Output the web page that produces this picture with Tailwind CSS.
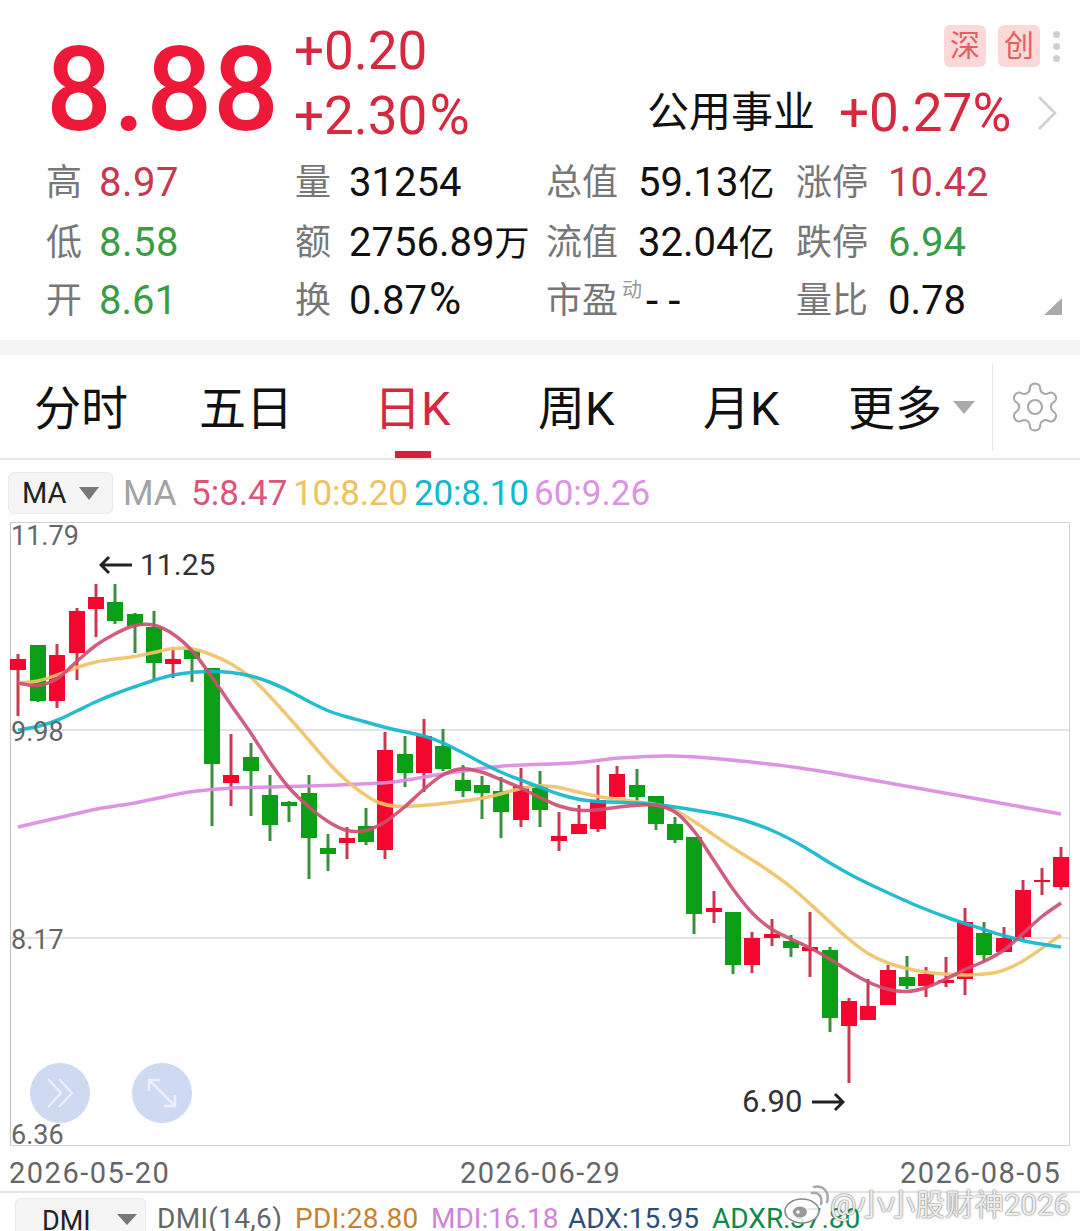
<!DOCTYPE html>
<html lang="en">
<head>
    <meta charset="UTF-8">
    <meta name="viewport" content="width=device-width, initial-scale=1.0">
    <script src="https://cdn.jsdelivr.net/npm/@tailwindcss/browser@4"></script>
    <title>K-line</title>
</head>
<body class="bg-white overflow-hidden font-['Roboto','Noto_Sans_CJK_SC',sans-serif]">
<div class="w-[1080px] h-[1231px] overflow-hidden relative">

    <!-- Quote header -->
    <section class="h-[340px]">
        <div class="flex h-[153px]">
            <div class="w-[295px] shrink-0 pl-[46px] pt-[32px] text-[116px] leading-[116px] tracking-[1px] font-medium text-[#ee1838]">8.88</div>
            <div class="w-[353px] shrink-0 pt-[19px] -ml-[1px] text-[53px] leading-[65px] text-[#d6283f]">
                <div>+0.20</div>
                <div>+2.30<span class="ml-[2px] text-[55px] leading-none">%</span></div>
            </div>
            <div class="flex-1 ml-[1px]">
                <div class="flex justify-end items-center gap-3 pt-[25px] pr-[20px]">
                    <span class="w-[42px] h-[42px] rounded-md bg-[#fcd9d9] text-[#e4605f] text-[30px] leading-[42px] text-center">深</span>
                    <span class="w-[42px] h-[42px] rounded-md bg-[#fcd9d9] text-[#e4605f] text-[30px] leading-[42px] text-center">创</span>
                    <div class="flex flex-col gap-[5px] ml-[1px]">
                        <i class="block w-[7px] h-[7px] rounded-full bg-[#cfcfcf]"></i>
                        <i class="block w-[7px] h-[7px] rounded-full bg-[#cfcfcf]"></i>
                        <i class="block w-[7px] h-[7px] rounded-full bg-[#cfcfcf]"></i>
                    </div>
                </div>
                <div class="flex items-center mt-[22px] h-[48px]">
                    <span class="w-[192px] -ml-[1px] text-[42px] leading-[48px] text-[#111]">公用事业</span>
                    <span class="w-[198px] text-[53px] leading-[48px] text-[#d6283f]">+0.27%</span>
                    <svg width="20" height="36" viewBox="0 0 20 36" fill="none" stroke="#cfcfcf" stroke-width="2.5"><path d="M2 2l16 16L2 34"/></svg>
                </div>
            </div>
        </div>
        <div class="relative grid grid-cols-[249px_251px_250px_1fr] grid-rows-[60px_60px_55px] pl-[46px] text-[40px] leading-[48px] text-[#111]">
            <div class="flex items-center"><span class="w-[53px] text-[36px] text-[#777]">高</span><span class="text-[#c9384f] tracking-[0.5px]">8.97</span></div>
            <div class="flex items-center"><span class="w-[54px] text-[36px] text-[#777]">量</span><span>31254</span></div>
            <div class="flex items-center"><span class="w-[92px] text-[36px] text-[#777]">总值</span><span>59.13<span class="text-[36px] leading-none">亿</span></span></div>
            <div class="flex items-center"><span class="w-[92px] text-[36px] text-[#777]">涨停</span><span class="text-[#c9384f]">10.42</span></div>

            <div class="flex items-center"><span class="w-[53px] text-[36px] text-[#777]">低</span><span class="text-[#3a9c45] tracking-[0.5px]">8.58</span></div>
            <div class="flex items-center"><span class="w-[54px] text-[36px] text-[#777]">额</span><span class="whitespace-nowrap">2756.89<span class="text-[35px] leading-none">万</span></span></div>
            <div class="flex items-center"><span class="w-[92px] text-[36px] text-[#777]">流值</span><span class="whitespace-nowrap">32.04<span class="text-[36px] leading-none">亿</span></span></div>
            <div class="flex items-center"><span class="w-[92px] text-[36px] text-[#777]">跌停</span><span class="text-[#3a9c45]">6.94</span></div>

            <div class="flex items-center"><span class="w-[53px] text-[36px] text-[#777]">开</span><span class="text-[#3a9c45]">8.61</span></div>
            <div class="flex items-center"><span class="w-[54px] text-[36px] text-[#777]">换</span><span>0.87<span class="ml-[2px] text-[44px] leading-none">%</span></span></div>
            <div class="flex items-center"><span class="text-[36px] text-[#777]">市盈</span><span class="text-[20px] text-[#999] ml-[4px] -translate-y-[11px] mr-[4px]">动</span><span class="tracking-[10px] text-[44px]">--</span></div>
            <div class="flex items-center"><span class="w-[92px] text-[36px] text-[#777]">量比</span><span>0.78</span></div>
            <svg class="absolute left-[1044px] top-[145px]" width="18" height="17" viewBox="0 0 18 17"><path d="M18 0v17H0z" fill="#ababab"/></svg>
        </div>
    </section>

    <div class="h-[15px] bg-[#f5f5f5]"></div>

    <!-- Period tabs -->
    <nav class="flex items-center h-[105px] pt-[5px] border-b-2 border-[#e6e6e6] relative text-[47px] leading-[60px] text-[#111]">
        <span class="ml-[34px] w-[165px]">分时</span>
        <span class="w-[175px]">五日</span>
        <span class="w-[164px] text-[#d6283f] relative">日K
            <i class="absolute left-[21px] top-[72px] w-[36px] h-[7px] bg-[#d6203c]"></i>
        </span>
        <span class="w-[165px]">周K</span>
        <span class="w-[145px]">月K</span>
        <span>更多</span>
        <svg class="ml-[11px] -mt-[4px]" width="22" height="13" viewBox="0 0 22 13"><path d="M0 0h22L11 13z" fill="#aaa"/></svg>
        <div class="w-px h-[88px] bg-[#e6e6e6] ml-[17px] -mt-[5px]"></div>
        <svg class="ml-[14px] -mt-[5px]" width="56" height="56" viewBox="0 0 24 24" fill="none" stroke="#a8a8a8" stroke-width="0.9"><path d="M12.22 2h-.44a2 2 0 0 0-2 2v.18a2 2 0 0 1-1 1.73l-.43.25a2 2 0 0 1-2 0l-.15-.08a2 2 0 0 0-2.73.73l-.22.38a2 2 0 0 0 .73 2.73l.15.1a2 2 0 0 1 1 1.72v.51a2 2 0 0 1-1 1.74l-.15.09a2 2 0 0 0-.73 2.73l.22.38a2 2 0 0 0 2.73.73l.15-.08a2 2 0 0 1 2 0l.43.25a2 2 0 0 1 1 1.73V20a2 2 0 0 0 2 2h.44a2 2 0 0 0 2-2v-.18a2 2 0 0 1 1-1.73l.43-.25a2 2 0 0 1 2 0l.15.08a2 2 0 0 0 2.73-.73l.22-.39a2 2 0 0 0-.73-2.73l-.15-.08a2 2 0 0 1-1-1.74v-.5a2 2 0 0 1 1-1.74l.15-.09a2 2 0 0 0 .73-2.73l-.22-.38a2 2 0 0 0-2.73-.73l-.15.08a2 2 0 0 1-2 0l-.43-.25a2 2 0 0 1-1-1.73V4a2 2 0 0 0-2-2z"/><circle cx="12" cy="12" r="3"/></svg>
    </nav>

    <!-- MA legend -->
    <div class="flex items-center h-[62px] pt-[4px] pl-[8px] text-[35px] leading-[40px]">
        <div class="flex items-center w-[105px] h-[42px] rounded-md bg-[#f5f5f5] border border-[#e9e9e9] pl-[13px] text-[29px] text-[#222]">
            MA
            <svg class="ml-[12px]" width="20" height="13" viewBox="0 0 20 13"><path d="M0 0h20L10 13z" fill="#777"/></svg>
        </div>
        <span class="ml-[10px] mt-[2px] w-[68px] text-[#a3a3a3]">MA</span>
        <span class="w-[102px] mt-[2px] text-[#d9567a]">5:8.47</span>
        <span class="w-[121px] mt-[2px] text-[#eec25e] tracking-[-0.2px]">10:8.20</span>
        <span class="w-[120px] mt-[2px] text-[#10b9cf] tracking-[-0.2px]">20:8.10</span>
        <span class="mt-[2px] text-[#dc93e2]">60:9.26</span>
    </div>

    <!-- Candle chart -->
    <div class="relative h-[624px] ml-[10px] w-[1060px] border border-[#d2d2d2] border-l-[#c4c4c4] text-[27px] leading-[30px] text-[#666]">
        <svg id="chart" class="absolute left-[-11px] top-[-523px]" width="1080" height="1231" viewBox="0 0 1080 1231" fill="none"></svg>
        <span class="absolute left-0 top-[-2px]">11.79</span>
        <span class="absolute left-0 top-[194px]">9.98</span>
        <span class="absolute left-0 top-[402px]">8.17</span>
        <span class="absolute left-0 top-[597px]">6.36</span>

        <div class="absolute left-[88px] top-[24px] flex items-center text-[30px] leading-[36px] text-[#333]">
            <svg width="34" height="20" viewBox="0 0 34 20" fill="none" stroke="#222" stroke-width="3"><path d="M33 10H2M10 2l-8 8 8 8"/></svg>
            <span class="ml-[7px]">11.25</span>
        </div>
        <div class="absolute left-[731px] top-[561px] flex items-center text-[31px] leading-[36px] text-[#333]">
            <span class="mr-[9px]">6.90</span>
            <svg width="34" height="20" viewBox="0 0 34 20" fill="none" stroke="#222" stroke-width="3"><path d="M1 10h31M24 2l8 8-8 8"/></svg>
        </div>

        <div class="absolute left-[19px] top-[540px] w-[60px] h-[60px] rounded-full bg-[#ced9f2] flex items-center justify-center">
            <svg width="36" height="36" viewBox="0 0 36 36" fill="none" stroke="#ecf0fa" stroke-width="2"><path d="M6 4l13 14L6 32M17 4l13 14-13 14"/></svg>
        </div>
        <div class="absolute left-[121px] top-[540px] w-[60px] h-[60px] rounded-full bg-[#ced9f2] flex items-center justify-center">
            <svg width="36" height="36" viewBox="0 0 36 36" fill="none" stroke="#ecf0fa" stroke-width="2.5"><path d="M5 5l26 26M5 16V5h11M31 20v11H20"/></svg>
        </div>
    </div>

    <!-- Date axis -->
    <div class="flex h-[47px] pl-[9px] border-b-2 border-[#e3e3e3] text-[29px] leading-[54px] tracking-[1.5px] text-[#666]">
        <span class="w-[451px]">2026-05-20</span>
        <span class="w-[440px]">2026-06-29</span>
        <span>2026-08-05</span>
    </div>

    <!-- DMI legend -->
    <div class="flex items-start pt-[5px] pl-[15px] text-[28px] leading-[34px]">
        <div class="flex items-center w-[131px] h-[45px] rounded-md bg-[#f5f5f5] border border-[#e9e9e9] pl-[26px] text-[27px] text-[#222]">
            DMI
            <svg class="ml-[26px] -mt-[3px]" width="20" height="11" viewBox="0 0 20 11"><path d="M0 0h20L10 11z" fill="#777"/></svg>
        </div>
        <span class="ml-[11px] mt-[4px] w-[138px] text-[#666] tracking-[0.3px]">DMI(14,6)</span>
        <span class="w-[136px] mt-[4px] text-[#c7812e] tracking-[0.3px]">PDI:28.80</span>
        <span class="w-[137px] mt-[4px] text-[#cf84d9]">MDI:16.18</span>
        <span class="w-[144px] mt-[4px] text-[#2c4f78]">ADX:15.95</span>
        <span class="mt-[4px] text-[#0f8a4a]">ADXR:37.80</span>
    </div>

    <!-- Watermark -->
    <div class="absolute left-[783px] top-[1184px] flex items-center">
        <svg width="46" height="42" viewBox="0 0 46 42" fill="none">
            <ellipse cx="19" cy="27" rx="17" ry="12" fill="#fff" fill-opacity="0.85" stroke="#8a8a8a" stroke-width="1.5"/>
            <ellipse cx="17" cy="28" rx="7" ry="5.5" fill="#9a9a9a"/>
            <circle cx="15" cy="28" r="1.8" fill="#fff"/>
            <path d="M29 9c6-1 11 3 9 11M31 3c9-2 16 5 13 15" stroke="#a8a8a8" stroke-width="2.5" stroke-linecap="round"/>
        </svg>
        <span class="ml-[1px] text-[29.5px] leading-[40px] text-white/85 whitespace-nowrap [text-shadow:0_0_2px_#777,0_0_1px_#777]">@小小股财神2026</span>
    </div>
</div>

<script>
    // candle rows: x, wick top, wick bottom, body top, body bottom, up?
    const candles = [
        [18,654,716,659,670,1],[38,645,702,645,701,0],[57,644,708,655,701,1],[77,608,680,611,653,1],
        [96,584,637,597,609,1],[115,584,624,602,621,0],[135,613,653,614,626,0],[154,611,681,627,663,0],
        [173,650,678,659,664,1],[192,650,682,650,659,0],[212,669,826,668,764,0],[231,734,806,775,783,1],
        [251,743,816,757,771,0],[270,775,841,795,825,0],[289,801,822,802,806,0],[309,775,879,793,838,0],
        [328,834,871,848,854,0],[347,827,859,838,843,1],[366,808,845,826,842,0],[385,732,859,750,850,1],
        [405,736,787,754,773,0],[424,719,792,736,773,1],[443,729,771,746,769,0],[463,765,797,780,791,0],
        [482,776,819,785,793,0],[501,777,838,791,812,0],[521,768,827,786,820,1],[540,771,827,787,810,0],
        [559,812,851,836,841,1],[579,805,834,824,834,1],[598,765,832,800,829,1],[617,766,797,774,797,1],
        [637,769,805,785,797,0],[656,796,830,796,824,0],[675,817,843,824,840,0],[694,837,934,837,914,0],
        [714,891,923,908,912,1],[733,912,974,912,965,0],[752,932,973,938,965,1],[772,919,946,934,938,1],
        [791,935,957,941,948,0],[810,912,977,947,951,1],[830,947,1032,950,1018,0],[849,998,1083,1001,1026,1],
        [868,979,1020,1006,1020,1],[888,965,1005,970,1005,1],[907,956,989,977,986,0],[926,967,997,974,986,1],
        [946,957,987,980,983,1],[965,908,995,922,979,1],[984,922,961,933,955,0],[1004,927,952,938,952,1],
        [1023,880,940,890,937,1],[1042,868,895,880,882,1],[1061,847,890,857,887,1]
    ];

    const ma60 = [[18,827],[57,818],[97,809],[135,803],[173,795],[197,791],[233,788],[270,787],[309,786],[360,784],[393,782],[443,774],[503,766],[573,763],[620,758],[670,756],[720,759],[800,768],[900,785],[1000,803],[1061,814]];
    const ma5 = [[18,683],[38,688],[57,683],[77,660],[96,643],[115,635],[135,622],[154,623],[173,633],[193,648],[212,677],[231,707],[251,730],[270,765],[289,790],[309,807],[328,823],[347,833],[366,833],[385,823],[405,808],[424,788],[443,773],[463,765],[482,772],[501,780],[521,787],[540,798],[559,807],[579,812],[598,810],[617,807],[637,805],[656,804],[675,808],[694,828],[713,860],[733,890],[752,915],[772,932],[791,938],[810,948],[830,958],[849,972],[868,983],[888,990],[907,994],[926,988],[946,980],[965,968],[984,962],[1004,953],[1023,933],[1042,915],[1061,903]];
    const ma10 = [[18,683],[38,683],[57,675],[77,667],[96,661],[115,659],[135,657],[154,653],[173,647],[193,647],[212,655],[231,663],[251,675],[270,697],[289,717],[309,740],[328,763],[347,783],[360,790],[377,805],[395,808],[424,805],[463,802],[482,798],[501,795],[521,787],[540,785],[559,786],[579,793],[598,797],[617,799],[637,802],[656,804],[675,808],[693,820],[733,850],[767,868],[790,885],[820,913],[847,938],[867,955],[890,965],[920,972],[947,975],[973,975],[1000,974],[1017,965],[1040,950],[1061,935]];
    const ma20 = [[18,730],[38,727],[57,722],[77,710],[96,702],[115,693],[135,687],[154,680],[173,674],[193,672],[212,671],[231,672],[251,675],[270,682],[289,690],[309,702],[328,712],[347,717],[360,720],[385,728],[405,732],[424,735],[443,742],[463,753],[482,763],[501,773],[521,780],[540,787],[559,795],[579,800],[598,802],[617,802],[637,803],[656,804],[675,807],[694,810],[720,814],[747,820],[777,832],[803,845],[827,862],[853,877],[887,892],[920,908],[953,920],[980,928],[1007,937],[1030,943],[1061,947]];

    // one pass of a small moving average, to take out kinks from the read-off points
    function relax(pts) {
        return pts.map((p, i) => {
            if (i === 0 || i === pts.length - 1) return p;
            const a = pts[i - 1], b = pts[i + 1];
            return [(a[0] + 2 * p[0] + b[0]) / 4, (a[1] + 2 * p[1] + b[1]) / 4];
        });
    }

    // Catmull-Rom through the points
    function smooth(pts) {
        let d = `M${pts[0][0]} ${pts[0][1]}`;
        for (let i = 0; i < pts.length - 1; i++) {
            const p0 = pts[i - 1] || pts[i], p1 = pts[i], p2 = pts[i + 1], p3 = pts[i + 2] || p2;
            d += `C${p1[0] + (p2[0] - p0[0]) / 6} ${p1[1] + (p2[1] - p0[1]) / 6} ${p2[0] - (p3[0] - p1[0]) / 6} ${p2[1] - (p3[1] - p1[1]) / 6} ${p2[0]} ${p2[1]}`;
        }
        return d;
    }

    let out = '<path d="M11 730H1069M11 938H1069" stroke="#dcdcdc" stroke-width="1.5"/>';
    for (const [x, wt, wb, bt, bb, up] of candles) {
        out += `<rect x="${x - 1.5}" y="${wt}" width="3" height="${wb - wt}" fill="${up ? '#c83a52' : '#3d8f40'}"/>`;
        out += `<rect x="${x - 8}" y="${bt}" width="16" height="${bb - bt}" fill="${up ? '#f5062f' : '#0a9f14'}"/>`;
    }
    const lines = [[ma60, '#da8be0'], [relax(ma10), '#efc368'], [relax(ma20), '#14b6cb'], [relax(ma5), '#cc5072']];
    for (const [pts, color] of lines) {
        out += `<path d="${smooth(pts)}" stroke="${color}" stroke-width="3.5" stroke-opacity="0.92"/>`;
    }
    document.getElementById('chart').innerHTML = out;
</script>
</body>
</html>
